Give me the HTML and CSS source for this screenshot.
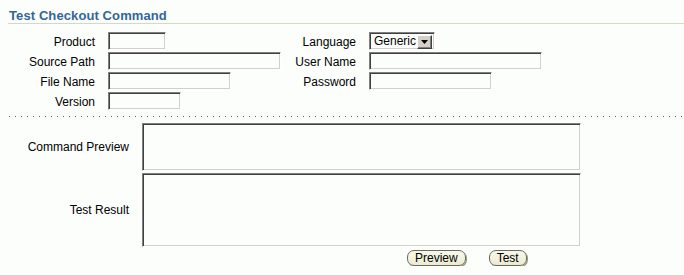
FILE: index.html
```html
<!DOCTYPE html>
<html>
<head>
<meta charset="utf-8">
<link rel="stylesheet" href="styles.css">
</head>
<body>
<div class="page">
  <h1 class="title">Test Checkout Command</h1>
  <div class="fields">
    <label class="lbl">Product</label>
    <div><span class="input w57"></span></div>
    <label class="lbl">Language</label>
    <div>
      <span class="select">
        <span class="select-text">Generic</span>
        <span class="select-btn"><svg width="7" height="4" viewBox="0 0 7 4"><path d="M0 0h7L3.5 4z" fill="#000"/></svg></span>
      </span>
    </div>

    <label class="lbl">Source Path</label>
    <div><span class="input w172"></span></div>
    <label class="lbl">User Name</label>
    <div><span class="input w172"></span></div>

    <label class="lbl">File Name</label>
    <div><span class="input w122"></span></div>
    <label class="lbl">Password</label>
    <div><span class="input w122"></span></div>

    <label class="lbl">Version</label>
    <div><span class="input w72"></span></div>
  </div>
  <div class="dots"></div>
  <div class="areas">
    <label class="lbl2">Command Preview</label>
    <span class="input area1"></span>
    <label class="lbl2">Test Result</label>
    <span class="input area2"></span>
  </div>
  <div class="buttons">
    <button class="btn">Preview</button>
    <button class="btn">Test</button>
  </div>
</div>
</body>
</html>
```
FILE: styles.css
```css
html, body {
  margin: 0;
  padding: 0;
  background: #fcfefc;
}
body {
  font-family: "Liberation Sans", Arial, sans-serif;
  font-size: 12px;
  color: #000;
}
.page {
  padding-left: 8px;
}
.title {
  margin: 0;
  padding: 8px 0 0 1px;
  font-size: 13px;
  line-height: 15px;
  font-weight: bold;
  letter-spacing: 0.1px;
  color: #336699;
  border-bottom: 1px solid #d3d9c3;
}
.fields {
  margin-top: 8px;
  display: grid;
  grid-template-columns: 100px 172px 89px auto;
  grid-auto-rows: 18px;
  row-gap: 2px;
}
.lbl {
  text-align: right;
  padding-right: 13px;
  line-height: 18px;
  padding-top: 1px;
}
.input {
  display: block;
  box-sizing: border-box;
  height: 18px;
  background: #fcfefc;
  border: 1px solid;
  border-color: #808080 #ffffff #ffffff #808080;
  box-shadow: inset 1px 1px 0 #404040, inset -1px -1px 0 #d4d0c8;
}
.w57 { width: 58px; }
.w172 { width: 173px; }
.w122 { width: 123px; }
.w72 { width: 73px; }
.select {
  display: flex;
  box-sizing: border-box;
  width: 66px;
  height: 18px;
  background: #fcfefc;
  border: 1px solid;
  border-color: #808080 #ffffff #ffffff #808080;
  box-shadow: inset 1px 1px 0 #404040, inset -1px -1px 0 #d4d0c8;
  padding: 2px;
}
.select-text {
  flex: 1;
  line-height: 13px;
  padding-left: 2px;
}
.select-btn {
  box-sizing: border-box;
  width: 15px;
  height: 14px;
  background: #d4d0c8;
  border: 1px solid;
  border-color: #ffffff #404040 #404040 #ffffff;
  box-shadow: inset -1px -1px 0 #808080;
  display: flex;
  align-items: center;
  justify-content: center;
}
.dots {
  margin-top: 6px;
  height: 1px;
  background-image: linear-gradient(to right, #336699 1px, transparent 1px);
  background-size: 6px 1px;
  background-position: 1px 0;
}
.areas {
  margin-top: 6px;
  display: grid;
  grid-template-columns: 134px 439px;
  grid-template-rows: 48px 74px;
  row-gap: 2px;
}
.lbl2 {
  align-self: center;
  text-align: right;
  padding-right: 13px;
}
.area1, .area2 {
  height: auto;
}
.buttons {
  margin-top: 3px;
  padding-left: 399px;
  display: flex;
  gap: 23px;
}
.btn {
  font-family: "Liberation Sans", Arial, sans-serif;
  font-size: 12px;
  line-height: 13px;
  height: 16px;
  padding: 0 7px;
  margin: 0;
  color: #000;
  background: linear-gradient(#f8f8ea, #ebebd3);
  border: 1px solid #6a6a55;
  border-radius: 7px;
  box-shadow: 1px 1px 0 #9a9a80;
}
```
